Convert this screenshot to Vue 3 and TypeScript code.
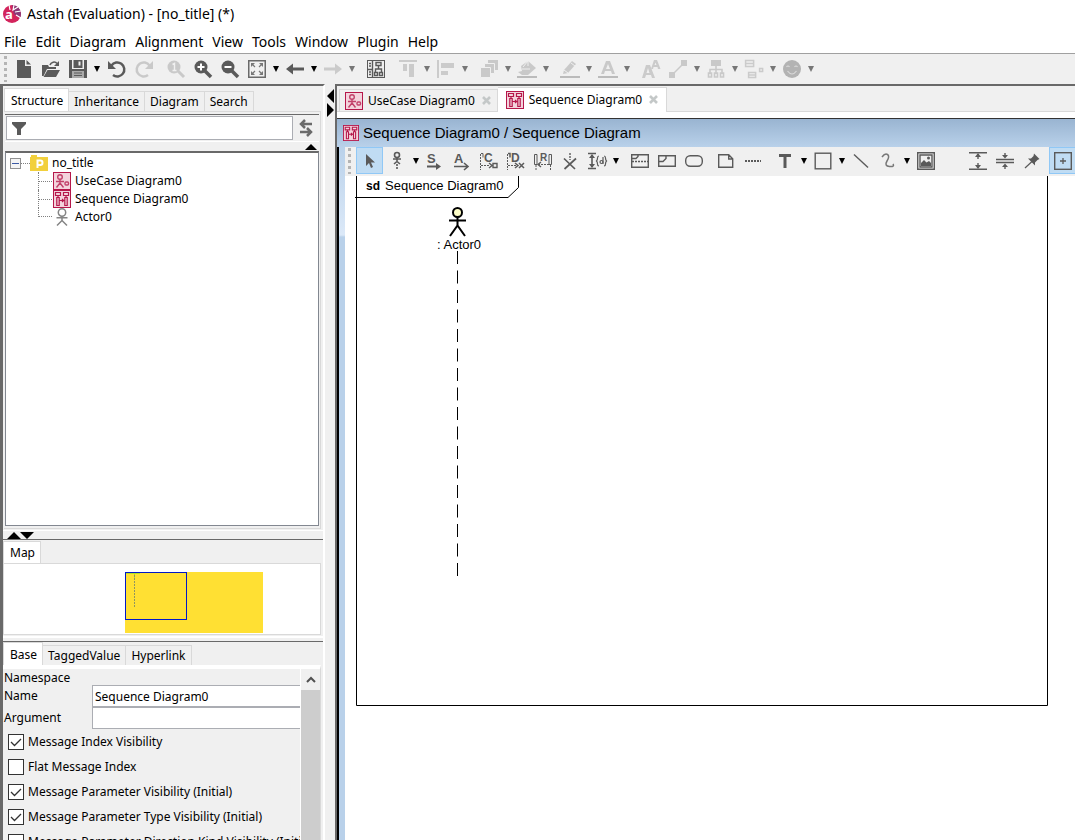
<script setup lang="ts">
import { ref } from 'vue'

interface Tool {
  name?: string
  label?: string
  arrow?: boolean
  off?: boolean
  gap?: number
  on?: boolean
}

const usecaseIcon =
  '<rect x=".5" y=".5" width="17" height="17" fill="#f3d3dc" stroke="#b5174a"/><g fill="none" stroke="#c2416a" stroke-width="1.4"><circle cx="7" cy="5" r="2.3"/><path d="M7 7.5V11M3 9.5h8M3.5 15.5L7 11l3.500 4.500"/><rect x="12" y="10" width="3.500" height="3" rx="1"/></g>'
const sequenceIcon =
  '<rect x=".5" y=".5" width="17" height="17" fill="#f3d3dc" stroke="#b5174a"/><g fill="none" stroke="#b5174a" stroke-width="1.200"><path d="M2.500 2.500h5v3h-5zM10.500 2.500h5v3h-5zM5 5.500v2M13 5.500v2M3.800 7.500h2.400v8H3.800zM11.800 7.500h2.400v8h-2.400zM6.500 10.500h4.500M9 9l1.600 1.500L9 12"/></g>'
const folderIcon =
  '<path d="M0 3h1V1h6v2h11v14H0z" fill="#f2d03c"/><path d="M7.500 14V6.500h2.800a2.200 2.200 0 0 1 0 4.400H8" fill="none" stroke="#fff" stroke-width="2"/>'
const actorIcon =
  '<g fill="none" stroke="#858585" stroke-width="1.500"><circle cx="9" cy="4.500" r="3.700"/><path d="M9 8v5M3.500 9.800h11M4 17.500L9 12.500l5 5"/></g>'

const g = '#5a5a5a'
const font = 'font-family="Liberation Sans, Arial, sans-serif"'
const icons: Record<string, string> = {
  new: `<path d="M2 0h8v6h6v12H2zM11.500 0L16 4.500h-4.500z" fill="${g}"/>`,
  open: `<path d="M0 5h6l1 2h7v2H5L1.500 16H0z M5.500 10H18l-4 7H1.500z" fill="${g}"/><path d="M8 5c1-3 5-4 7-1.500" fill="none" stroke="${g}" stroke-width="1.600"/><path d="M17 1v5h-5z" fill="${g}"/>`,
  save: `<path fill-rule="evenodd" d="M0 0h18v18H0zM3 0v9h12V0zM3 11.500V18h12v-6.500z" fill="${g}"/><path d="M4.500 0h9v8h-9z" fill="${g}"/><path d="M9.500 1.500h2v4h-2z" fill="#f0f0f0"/><path d="M3 11h12v7H3z" fill="#aaa"/><path d="M5 13h8M5 15.500h8" stroke="${g}" stroke-width="1"/>`,
  undo: `<path d="M3.500 5.500A7 7 0 1 1 5 15" fill="none" stroke="${g}" stroke-width="2.500"/><path d="M0 1v8h8z" fill="${g}"/>`,
  redo: `<path d="M14.500 5.500A7 7 0 1 0 13 15" fill="none" stroke="${g}" stroke-width="2.500"/><path d="M18 1v8h-8z" fill="${g}"/>`,
  one: `<circle cx="7" cy="7" r="6.500" fill="${g}"/><path d="M10 10l7 7" stroke="${g}" stroke-width="3"/><path d="M5.500 4.500L7.500 3.500v7M5.500 10.500h4" stroke="#f0f0f0" stroke-width="1.400" fill="none"/>`,
  zin: `<circle cx="7" cy="7" r="6.500" fill="${g}"/><path d="M10 10l7 7" stroke="${g}" stroke-width="3.500"/><path d="M3.500 7h7M7 3.500v7" stroke="#fff" stroke-width="2"/>`,
  zout: `<circle cx="7" cy="7" r="6.500" fill="${g}"/><path d="M10 10l7 7" stroke="${g}" stroke-width="3.500"/><path d="M3.500 7h7" stroke="#fff" stroke-width="2"/>`,
  fit: `<rect x=".75" y=".75" width="16.500" height="16.500" fill="none" stroke="#6a6a6a" stroke-width="1.500"/><path d="M3 3h4L3 7zM15 3v4l-4-4zM3 15v-4l4 4zM15 15h-4l4-4z" fill="#777"/><path d="M4 4l3 3M14 4l-3 3M4 14l3-3M14 14l-3-3" stroke="#777" stroke-width="1.200"/>`,
  back: `<path d="M0 9l7-5.500v4h11v3H7v4z" fill="${g}"/>`,
  fwd: `<path d="M18 9l-7-5.500v4H0v3h11v4z" fill="${g}"/>`,
  struct: `<g fill="none" stroke="${g}"><rect x=".5" y=".5" width="17" height="17"/><path d="M5.500 1v16M1 9.500h4M2 3.500h2M2 6h2M2 12h2M2 14.500h2M9 2.500h5v3H9zM11.500 5.500v3M8.500 12V9h6v3M7.500 12.500h3v3h-3zM12.500 12.500h3v3h-3z" stroke-width="1.400"/></g>`,
  atop: `<path d="M0 0h18v2H0zM4 4h4v7H4zM10 4h5v13h-5z" fill="${g}"/>`,
  aleft: `<path d="M0 0h2v18H0zM4 3h13v5H4zM4 11h7v4H4z" fill="${g}"/>`,
  layers: `<path d="M8 0h10v10H8z" fill="${g}"/><path d="M4.500 3.500h10v10h-10z" fill="${g}" stroke="#f0f0f0"/><path d="M.5 7.500h10v10H.5z" fill="${g}" stroke="#f0f0f0"/>`,
  bucket: `<path d="M3 6l7-5 8 7-8 7H4L0 12l4-1z" fill="${g}"/><path d="M5 7l5-6v5M4 9h8" stroke="#f0f0f0" fill="none"/><path d="M-1 16h20v2H-1z" fill="#222"/>`,
  pen: `<path d="M2 14l1-4 8-9 4 3-8 9z" fill="${g}"/><path d="M3 10l4 3M10 3l4 3" stroke="#f0f0f0"/><path d="M-1 16h20v2H-1z" fill="#222"/>`,
  fontcolor: `<path fill-rule="evenodd" d="M7 1h4l5 13h-3l-1-3H6l-1 3H2zM9 4L7 9h4z" fill="${g}"/><path d="M-1 16h20v2H-1z" fill="#222"/>`,
  fontsize: `<path fill-rule="evenodd" d="M4 5h4l5 13h-3l-1-3H4l-1 3H0zM6 8l-1.500 5h3zM12 0h3l3.500 9H16l-.5-2h-4l-.5 2H9zM13.500 2.500L12.500 5h2z" fill="${g}"/>`,
  link: `<path d="M3 15L15 3" stroke="${g}" stroke-width="1.500"/><path d="M0 12h6v6H0zM12 0h6v6h-6z" fill="${g}"/>`,
  tree: `<path d="M4 0h10v6H4z" fill="${g}"/><path d="M9 6v8M3 14V9.500h12V14M1.500 13h3v4h-3zM7.500 13h3v4h-3zM13.500 13h3v4h-3z" fill="none" stroke="${g}" stroke-width="1.600"/>`,
  boxes: `<g fill="none" stroke="${g}" stroke-width="1.500"><path d="M.6.600h8v6h-8zM1 3.500h7M3.600 12.600h7v5h-7zM4 15h6M14.600 8.600h3v3h-3z"/></g>`,
  smile: `<circle cx="9" cy="9" r="9" fill="#000"/><path d="M3.500 7q1.500-2 3 0M11.500 7q1.500-2 3 0M4.500 11q4.500 6 9 0" fill="none" stroke="#999" stroke-width="1.200"/>`,
  select: `<path d="M5 2v12l3-3 2 5 2-1-2-4.500h4z" fill="${g}"/>`,
  lifeline: `<g fill="none" stroke="${g}" stroke-width="1.600"><circle cx="9" cy="3" r="2.500"/><path d="M9 6v4M5 7h8M6 12l3-2.500L12 12"/><path d="M9 12v6" stroke-dasharray="2 1"/></g>`,
  sync: `<text x="1" y="11" ${font} font-size="13" font-weight="bold" fill="${g}">S</text><path d="M1 14.500h12" stroke="${g}" stroke-width="2"/><path d="M10 11l5 3.500-5 3.500z" fill="${g}"/>`,
  async: `<text x="1" y="11" ${font} font-size="13" font-weight="bold" fill="${g}">A</text><path d="M1 14.500h13M11 11l4 3.500-4 3.500" fill="none" stroke="${g}" stroke-width="1.600"/>`,
  create: `<g stroke="${g}" fill="none"><path d="M.5 2v16" stroke-dasharray="2 1"/><path d="M1 1.500h2v4" /><path d="M1 13.500h9" stroke-dasharray="2 1"/><path d="M9 11l3 2.500L9 16M13 11.500h4v4h-4z" stroke-width="1.400"/></g><text x="4" y="10" ${font} font-size="12" font-weight="bold" fill="${g}">C</text>`,
  destroy: `<g stroke="${g}" fill="none"><path d="M.5 2v16M1 13.500h9" stroke-dasharray="2 1"/><path d="M1 1.500h2v4M8 11l3 2.500L8 16M12 11l5 5M17 11l-5 5" stroke-width="1.500"/></g><text x="4" y="10" ${font} font-size="12" font-weight="bold" fill="${g}">D</text>`,
  reply: `<g stroke="${g}" fill="none"><path d="M3 2.500H.5v10H3zM15 2.500h2.500v10H15z"/><path d="M2 13v5M16.500 13v5M4 12.500h11" stroke-dasharray="2 1"/><path d="M7 10l-3 2.500L7 15" stroke-width="1.400"/></g><text x="6" y="9" ${font} font-size="10" font-weight="bold" fill="${g}">R</text>`,
  stop: `<path d="M9 1v7" stroke="${g}" stroke-width="1.400" stroke-dasharray="2 1"/><path d="M3 6.500l11 10.500M15 6.500L3.500 17" stroke="${g}" stroke-width="1.700"/>`,
  duration: `<path d="M0 1.500h8M0 16.500h8M4 3v12" stroke="${g}" stroke-width="1.600"/><path d="M4 2l3 4H1zM4 16l3-4H1z" fill="${g}"/><path d="M11 4q-1.500 0-1.500 2t-1 3q1 1 1 3t1.500 2M16 4q1.500 0 1.500 2t1 3q-1 1-1 3t-1.500 2M15 5v7" fill="none" stroke="${g}" stroke-width="1.200"/><circle cx="13.500" cy="10" r="1.500" fill="none" stroke="${g}" stroke-width="1.200"/>`,
  fragment: `<g fill="none" stroke="${g}" stroke-width="1.400"><path d="M.7 2.700h16.600v12.600H.7zM1 6.500h4l2-2V3"/><path d="M1 9.500h16" stroke-dasharray="2 1"/></g>`,
  use: `<path d="M.7 3.700h16.600v10.600H.7zM1 9.500h4l3-3V4" fill="none" stroke="${g}" stroke-width="1.400"/>`,
  state: `<rect x=".7" y="3.700" width="16.600" height="10.600" rx="4.500" fill="none" stroke="${g}" stroke-width="1.400"/>`,
  note: `<path d="M1.700 2.700h10l4 4v8.600h-14zM11.700 3v4h4" fill="none" stroke="${g}" stroke-width="1.400"/>`,
  anchor: `<path d="M1 9h16" stroke="${g}" stroke-width="2" stroke-dasharray="2 1"/>`,
  text: `<path d="M3 2h12v3h-4.500v11h-3V5H3z" fill="${g}"/>`,
  rect: `<rect x="1.200" y="1.200" width="15.600" height="15.600" fill="none" stroke="${g}" stroke-width="1.400"/>`,
  line: `<path d="M2 2.500L16 15.500" stroke="${g}" stroke-width="1.400"/>`,
  curve: `<path d="M3 5q3-4 5.500-2.500T8 9t2.500 5.500T14 12" fill="none" stroke="#777" stroke-width="1.500"/>`,
  image: `<path d="M.7.700h16.600v16.600H.7zM3 3h12v12H3z" fill="none" stroke="${g}" stroke-width="1.400"/><path d="M4 14v-3l3-3 2.500 2.500L12 9l2 2v3z" fill="${g}"/><circle cx="11.500" cy="6" r="1.500" fill="${g}"/>`,
  vexp: `<path d="M0 .7h18M0 17.300h18M9 2v5M9 11v5" stroke="${g}" stroke-width="1.400"/><path d="M9 1l3 4H6zM9 17l3-4H6z" fill="${g}"/>`,
  vcomp: `<path d="M0 7.500h18M0 10.500h18M9 1v4M9 13v4" stroke="${g}" stroke-width="1.400"/><path d="M9 6.500L6 3h6zM9 11.500L6 15h6z" fill="${g}"/>`,
  pin: `<path d="M11 1.500l5.500 5.500-2 1-2.500 2.500v3l-7-7h3L10.500 4z" fill="${g}"/><path d="M9 9.500L2 16" stroke="${g}" stroke-width="1.200"/>`,
  plus: `<rect x=".7" y=".7" width="16.600" height="16.600" fill="none" stroke="${g}" stroke-width="1.400"/><path d="M6 9h6M9 6v6" stroke="${g}" stroke-width="1.300"/>`,
}

const mainTools: Tool[] = [
  { name: 'new', label: 'New' }, { name: 'open', label: 'Open' }, { name: 'save', label: 'Save' }, { arrow: true },
  { name: 'undo', label: 'Undo', gap: 1 }, { name: 'redo', label: 'Redo', off: true },
  { name: 'one', label: 'Actual size', off: true, gap: 5 }, { name: 'zin', label: 'Zoom in' }, { name: 'zout', label: 'Zoom out' },
  { name: 'fit', label: 'Fit' }, { arrow: true }, { name: 'back', label: 'Back' }, { arrow: true },
  { name: 'fwd', label: 'Forward', off: true }, { arrow: true, off: true },
  { name: 'struct', label: 'Show in structure tree', gap: 5 },
  { name: 'atop', label: 'Align top', off: true, gap: 5 }, { arrow: true, off: true },
  { name: 'aleft', label: 'Align left', off: true }, { arrow: true, off: true },
  { name: 'layers', label: 'Order', off: true, gap: 5 }, { arrow: true, off: true },
  { name: 'bucket', label: 'Fill color', off: true }, { arrow: true, off: true },
  { name: 'pen', label: 'Line color', off: true, gap: 5 }, { arrow: true, off: true },
  { name: 'fontcolor', label: 'Font color', off: true }, { arrow: true, off: true },
  { name: 'fontsize', label: 'Font', off: true, gap: 5 },
  { name: 'link', label: 'Line style', off: true }, { arrow: true, off: true },
  { name: 'tree', label: 'Layout', off: true }, { arrow: true, off: true },
  { name: 'boxes', label: 'Visibility', off: true }, { arrow: true, off: true },
  { name: 'smile', label: 'Stereotype icon', off: true }, { arrow: true, off: true },
]

const diagramTools: Tool[] = [
  { name: 'select', label: 'Select', on: true }, { name: 'lifeline', label: 'Lifeline' }, { arrow: true },
  { name: 'sync', label: 'Synchronous message' }, { name: 'async', label: 'Asynchronous message' },
  { name: 'create', label: 'Create message' }, { name: 'destroy', label: 'Destroy message' },
  { name: 'reply', label: 'Reply message' }, { name: 'stop', label: 'Stop' },
  { name: 'duration', label: 'Duration constraint' }, { arrow: true },
  { name: 'fragment', label: 'Combined fragment', gap: 5 }, { name: 'use', label: 'Interaction use' }, { name: 'state', label: 'State invariant' },
  { name: 'note', label: 'Note', gap: 5 }, { name: 'anchor', label: 'Note anchor' },
  { name: 'text', label: 'Text', gap: 5 }, { arrow: true }, { name: 'rect', label: 'Rectangle' }, { arrow: true },
  { name: 'line', label: 'Line' }, { name: 'curve', label: 'Freehand' }, { arrow: true }, { name: 'image', label: 'Image' },
  { name: 'vexp', label: 'Expand vertically', gap: 25 }, { name: 'vcomp', label: 'Shrink vertically' },
  { name: 'pin', label: 'Lock tool' }, { name: 'plus', label: 'Auto adjust', gap: 4, on: true },
]

const menus = ['File', 'Edit', 'Diagram', 'Alignment', 'View', 'Tools', 'Window', 'Plugin', 'Help']
const treeTabs = ['Structure', 'Inheritance', 'Diagram', 'Search']
const propTabs = ['Base', 'TaggedValue', 'Hyperlink']
const nodes = [
  { icon: usecaseIcon, text: 'UseCase Diagram0' },
  { icon: sequenceIcon, text: 'Sequence Diagram0' },
  { icon: actorIcon, text: 'Actor0' },
]
const filter = ref('')
const diagramName = ref('Sequence Diagram0')
const argument = ref('')
const options = ref([
  { text: 'Message Index Visibility', on: true },
  { text: 'Flat Message Index', on: false },
  { text: 'Message Parameter Visibility (Initial)', on: true },
  { text: 'Message Parameter Type Visibility (Initial)', on: true },
  { text: 'Message Parameter Direction Kind Visibility (Initial)', on: false },
])
</script>

<template>
  <div class="app">
    <header class="title">
      <svg width="18" height="18" viewBox="0 0 18 18" aria-hidden="true">
        <circle cx="9" cy="9" r="9" fill="#d3245c" />
        <path d="M9 0a9 9 0 0 1 8 13L11 9z" fill="#8a3a78" />
        <path d="M6 0l1 5M11 0l-1 5 5-3M12 7l6-1M13 10l5 3" stroke="#fff" stroke-width="1.200" fill="none" />
        <text x="2" y="14" font-family="Open Sans, sans-serif" font-size="13" font-weight="bold" fill="#fff">a</text>
      </svg>
      <span>Astah (Evaluation) - [no_title] (*)</span>
    </header>
    <nav class="menu"><button v-for="m in menus" :key="m" type="button">{{ m }}</button></nav>

    <div class="toolbar">
      <i class="grip"></i>
      <template v-for="(t, i) in mainTools" :key="i">
        <i v-if="t.gap" :style="{ width: t.gap + 'px' }"></i>
        <button v-if="t.arrow" type="button" class="arrow" :class="{ off: t.off }" aria-label="More"></button>
        <button v-else type="button" class="tool" :class="{ off: t.off }" :aria-label="t.label">
          <svg width="18" height="18" viewBox="0 0 18 18" v-html="icons[t.name!]"></svg>
        </button>
      </template>
    </div>

    <div class="body">
      <aside class="side">
        <section class="structure">
          <div class="tabs">
            <button v-for="(t, i) in treeTabs" :key="t" type="button" :class="{ active: i === 0 }">{{ t }}</button>
          </div>
          <div class="pane">
            <div class="search">
              <label class="filter">
                <svg width="14" height="13" viewBox="0 0 14 13" aria-hidden="true"><path d="M0 0h14v2L9 7v6H5V7L0 2z" fill="#5a5a5a" /></svg>
                <input v-model="filter" type="text" aria-label="Filter" />
              </label>
              <button type="button" class="swap" aria-label="Synchronize">
                <svg width="14" height="18" viewBox="0 0 14 18"><path d="M13 5H2M6 1L2 5l4 4M1 13h11M8 9l4 4-4 4" fill="none" stroke="#6a6a6a" stroke-width="2.500" /></svg>
              </button>
            </div>
            <div class="collapse"><svg width="12" height="6" viewBox="0 0 12 6"><path d="M0 6l6-6 6 6z" /></svg></div>
            <div class="tree">
              <div class="root">
                <svg width="11" height="11" viewBox="0 0 11 11"><rect x=".5" y=".5" width="10" height="10" fill="#f4f4f4" stroke="#919191" /><path d="M2 5.500h7" stroke="#3c5aa5" /></svg>
                <i class="dots"></i>
                <svg width="18" height="18" viewBox="0 0 18 18" v-html="folderIcon"></svg>
                <span>no_title</span>
              </div>
              <ul>
                <li v-for="n in nodes" :key="n.text">
                  <i class="branch"></i>
                  <svg width="18" height="18" viewBox="0 0 18 18" v-html="n.icon"></svg>
                  <span>{{ n.text }}</span>
                </li>
              </ul>
            </div>
          </div>
        </section>

        <div class="split">
          <svg width="28" height="7" viewBox="0 0 28 7"><path d="M0 7l7-7 7 7zM13 0h14l-7 7z" /></svg>
        </div>

        <section class="map">
          <div class="tabs"><button type="button" class="active">Map</button></div>
          <div class="mapbox">
            <svg width="138" height="61" viewBox="0 0 138 61">
              <rect width="138" height="61" fill="#ffe033" />
              <path d="M1 1.500h14M9.500 2v4" stroke="#b8e020" />
              <path d="M9.500 3v33" stroke="#8f9560" stroke-dasharray="2 1" />
              <rect x=".5" y=".5" width="61" height="47" fill="none" stroke="#0018c8" />
            </svg>
          </div>
        </section>

        <section class="props">
          <div class="tabs">
            <button v-for="(t, i) in propTabs" :key="t" type="button" :class="{ active: i === 0 }">{{ t }}</button>
          </div>
          <div class="scroll">
            <form class="form" @submit.prevent>
              <div class="ns">Namespace</div>
              <div class="field"><label for="nm">Name</label><input id="nm" v-model="diagramName" type="text" /></div>
              <div class="field"><label for="arg">Argument</label><input id="arg" v-model="argument" type="text" /></div>
              <label v-for="o in options" :key="o.text" class="check">
                <input v-model="o.on" type="checkbox" />
                <svg width="16" height="16" viewBox="0 0 16 16" aria-hidden="true">
                  <rect x=".5" y=".5" width="15" height="15" fill="#fff" stroke="#333" />
                  <path v-if="o.on" d="M3 8l3.500 3.500L13 5" fill="none" stroke="#333" stroke-width="1.300" />
                </svg>
                <span>{{ o.text }}</span>
              </label>
            </form>
            <div class="bar">
              <button type="button" aria-label="Scroll up"><svg width="10" height="7" viewBox="0 0 10 7"><path d="M1 6l4-4 4 4" fill="none" stroke="#505050" stroke-width="2" /></svg></button>
              <div class="thumb"></div>
            </div>
          </div>
        </section>
      </aside>

      <div class="divider">
        <svg width="8" height="28" viewBox="0 0 8 28"><path d="M7 0v14L0 7zM0 14l7 7-7 7z" /></svg>
      </div>

      <main class="work">
        <div class="doctabs">
          <button type="button">
            <svg width="18" height="18" viewBox="0 0 18 18" v-html="usecaseIcon"></svg>
            <span>UseCase Diagram0</span>
            <svg class="x" width="9" height="9" viewBox="0 0 9 9"><path d="M1 1l7 7M8 1L1 8" stroke="#c4c8c8" stroke-width="2.600" /></svg>
          </button>
          <button type="button" class="active">
            <svg width="18" height="18" viewBox="0 0 18 18" v-html="sequenceIcon"></svg>
            <span>Sequence Diagram0</span>
            <svg class="x" width="9" height="9" viewBox="0 0 9 9"><path d="M1 1l7 7M8 1L1 8" stroke="#c4c8c8" stroke-width="2.600" /></svg>
          </button>
        </div>
        <div class="under"></div>
        <div class="frametitle">
          <svg width="16" height="16" viewBox="0 0 18 18" v-html="sequenceIcon"></svg>
          <h1>Sequence Diagram0 / Sequence Diagram</h1>
        </div>
        <div class="frame">
          <div class="content">
            <div class="toolbar inner">
              <i class="grip"></i>
              <template v-for="(t, i) in diagramTools" :key="i">
                <i v-if="t.gap" :style="{ width: t.gap + 'px' }"></i>
                <button v-if="t.arrow" type="button" class="arrow" aria-label="More"></button>
                <button v-else type="button" class="tool" :class="{ on: t.on }" :aria-label="t.label">
                  <svg width="18" height="18" viewBox="0 0 18 18" v-html="icons[t.name!]"></svg>
                </button>
              </template>
            </div>
            <svg class="canvas" width="704" height="532" viewBox="0 0 704 532">
              <path d="M11.500 0v529.500h691V0M10 21.500h153l10.500-10V0" fill="none" stroke="#000" />
              <text x="21" y="14" class="bold">sd</text>
              <text x="40" y="14">Sequence Diagram0</text>
              <circle cx="112.500" cy="36.500" r="4.500" fill="#ffffc8" stroke="#000" stroke-width="2" />
              <path d="M112.500 41v9M104 44.500h17M105 60l7.500-10.500L120 60" fill="none" stroke="#000" stroke-width="2" />
              <text x="92" y="73">: Actor0</text>
              <path d="M112.500 75v325" stroke="#000" stroke-dasharray="13 6.500" />
            </svg>
          </div>
        </div>
      </main>
    </div>
  </div>
</template>

<style>
body { margin: 0; }
</style>

<style scoped>
.app {
  display: flex;
  flex-direction: column;
  height: 100vh;
  overflow: hidden;
  background: #fff;
  color: #000;
  font: 12px/18px "Noto Sans", "Open Sans", sans-serif;
}
.app * { box-sizing: border-box; }
button { border: 0; padding: 0; margin: 0; background: none; font: inherit; color: inherit; }
svg { display: block; flex: none; overflow: visible; }
span, label, h1 { white-space: nowrap; }
.title { display: flex; align-items: center; gap: 6px; height: 30px; padding: 0 0 2px 3px; font: 14px/20px "Noto Sans", sans-serif; }
.menu { display: flex; gap: 9px; height: 23px; padding-left: 4px; font: 14px/23px "Noto Sans", sans-serif; }
.toolbar { display: flex; align-items: center; height: 31px; padding-left: 4px; background: #f0f0f0; border-top: 1px solid #a0a0a0; flex: none; }
.toolbar > i { flex: none; }
.grip { width: 3px; height: 26px; margin-right: 3px; background: repeating-linear-gradient(#b4b4b4 0 3px, #f0f0f0 3px 6px); }
.tool { display: flex; align-items: center; justify-content: center; width: 27px; height: 27px; flex: none; }
.tool.off svg { opacity: .25; }
.tool.on { background: #c0dcf3; border: 1px solid #90c8f6; }
.arrow { width: 11px; height: 20px; flex: none; }
.arrow::before { content: ""; display: block; margin: 0 auto; width: 0; border: 3px solid transparent; border-top: 6px solid #000; border-bottom: 0; }
.arrow.off::before { border-top-color: #777; }
.body { display: flex; flex: 1; min-height: 0; background: #f0f0f0; }
.side { display: flex; flex-direction: column; width: 325px; flex: none; border-left: 3px solid #696969; border-top: 2px solid #696969; border-right: 2px solid #fff; }
.structure { display: flex; flex-direction: column; flex: 1; min-height: 0; padding: 2px 2px 1px 1px; }
.tabs { display: flex; align-items: flex-end; height: 23px; flex: none; }
.tabs button { height: 20px; padding: 0 5px; border: 1px solid #d9d9d9; border-left: 0; border-bottom: 0; line-height: 19px; }
.tabs .active { height: 100%; border-left: 1px solid #d9d9d9; background: #fff; padding: 0 5px 0 6px; }
.pane { display: flex; flex-direction: column; flex: 1; min-height: 0; border: 1px solid #d9d9d9; border-left: 0; padding: 2px 1px 2px 1px; }
.search { display: flex; align-items: center; border-top: 1px solid #696969; height: 27px; flex: none; }
.filter { display: flex; align-items: center; flex: 1; height: 24px; margin-left: 1px; padding-left: 5px; gap: 4px; border: 1px solid #abadb3; background: #fff; }
.filter input { flex: 1; min-width: 0; border: 0; outline: 0; background: none; font: inherit; }
.swap { width: 26px; display: flex; justify-content: center; }
.collapse { height: 10px; flex: none; border-top: 1px solid #fff; padding: 2px 2px 0 0; display: flex; justify-content: flex-end; }
.tree { flex: 1; background: #fff; border: 1px solid #828790; border-top: 2px solid #696969; padding: 1px 4px; }
.root, .tree li { display: flex; align-items: center; height: 18px; }
.tree span { margin-left: 4px; }
.dots { width: 9px; border-top: 1px dotted #808080; }
.tree ul { list-style: none; margin: 0; padding: 0 0 0 28px; }
.branch { width: 14px; height: 18px; margin-right: 1px; background: repeating-linear-gradient(90deg, #808080 0 1px, #fff 1px 2px) 0 9px / 14px 1px no-repeat; border-left: 1px dotted #808080; }
.tree li:last-child .branch { align-self: flex-start; height: 9px; background-position: 0 8px; }
.split { height: 10px; flex: none; padding: 1px 0 0 4px; border-top: 1px solid #fff; border-bottom: 1px solid #696969; }
.map { flex: none; padding: 1px 2px 1px 0; border-bottom: 2px solid #fff; }
.map .tabs { height: 22px; }
.mapbox { background: #fff; border: 1px solid #d9d9d9; height: 72px; padding: 8px 0 0 121px; }
.props { flex: none; height: 199px; overflow: hidden; display: flex; flex-direction: column; border-top: 1px solid #696969; margin-top: 3px; padding-right: 2px; }
.scroll { flex: 1; min-height: 0; display: flex; border: 1px solid #d9d9d9; border-left: 0; border-bottom: 0; border-top: 4px solid #fff; }
.form { flex: 1; min-width: 0; overflow: hidden; }
.ns { height: 16px; line-height: 17px; padding-left: 1px; }
.field { display: flex; align-items: center; height: 22px; }
.field label { width: 89px; padding-left: 1px; flex: none; }
.field input { flex: 1; min-width: 0; height: 22px; border: 1px solid #abadb3; border-right: 0; padding: 0 2px; font: inherit; background: #fff; outline: 0; border-radius: 0; }
.check { display: flex; align-items: center; height: 25px; gap: 4px; padding-left: 5px; position: relative; }
.check input { position: absolute; opacity: 0; margin: 0; width: 16px; height: 16px; }
.bar { width: 20px; flex: none; border-left: 1px solid #fff; display: flex; flex-direction: column; }
.bar button { height: 21px; display: flex; align-items: center; justify-content: center; }
.thumb { flex: 1; background: #cdcdcd; }
.divider { width: 10px; flex: none; padding: 5px 0 0 2px; }
.work { flex: 1; min-width: 0; display: flex; flex-direction: column; border-left: 2px solid #696969; border-top: 2px solid #696969; }
.doctabs { display: flex; align-items: flex-end; height: 26px; padding-left: 2px; border-bottom: 1px solid #d9d9d9; flex: none; }
.doctabs button { display: flex; align-items: center; height: 22px; padding: 0 6px 0 5px; border: 1px solid #d9d9d9; border-bottom: 0; }
.doctabs span { margin: 0 7px 0 5px; }
.doctabs .active { height: 25px; margin-bottom: -1px; background: #fff; border-left: 0; padding: 0 8px 1px 8px; }
.under { height: 7px; flex: none; background: #fff; border-bottom: 1px solid #333; }
.frametitle { display: flex; align-items: center; height: 28px; flex: none; gap: 4px; padding-left: 6px; background: linear-gradient(#99b4d1, #b9d1ea); }
h1 { margin: 0; font: 15px/20px "Liberation Sans", Arial, sans-serif; }
.frame { flex: 1; min-height: 0; padding-left: 6px; border-left: 2px solid #000; background: linear-gradient(#b9d1ea, #dce9f8 88px, #b9d1ea 90px); }
.content { background: #fff; height: 100%; overflow: hidden; }
.inner { height: 29px; border: 0; padding: 0 0 2px 3px; }
.inner .grip { margin-right: 5px; }
.canvas text { font: 13px "Liberation Sans", Arial, sans-serif; }
.canvas .bold { font-size: 12px; font-weight: bold; }
</style>
